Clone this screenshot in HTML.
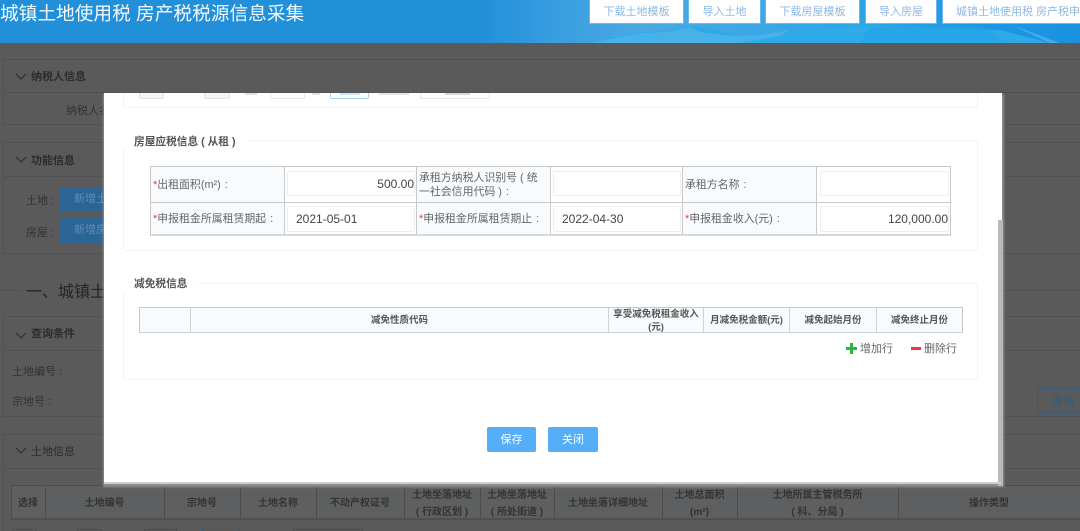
<!DOCTYPE html>
<html lang="zh-CN">
<head>
<meta charset="utf-8">
<style>
html,body{margin:0;padding:0;width:1080px;height:531px;overflow:hidden;background:#5a5a5a}
body{font-family:"Liberation Sans","Noto Sans CJK SC",sans-serif;position:relative}
#root{position:absolute;left:0;top:0;width:1080px;height:531px;overflow:hidden;filter:blur(.3px)}
.a{position:absolute;box-sizing:border-box;white-space:nowrap}
.line{position:absolute;background:#515151;height:1px}
.vl{position:absolute;background:#4c4c4c;width:1px}
.bgt{position:absolute;color:#2c2c2c;font-size:11px;white-space:nowrap;line-height:14px}
.bgb{font-weight:bold}
.th{position:absolute;color:#333;font-size:10px;font-weight:bold;text-align:center;line-height:17px;top:486px;height:35px;display:flex;align-items:center;justify-content:center;white-space:nowrap}
.hb{position:absolute;top:-1px;height:25px;background:#fff;border:1px solid #6fb8ea;color:#8db8e6;font-size:11px;line-height:25px;text-align:center;white-space:nowrap;overflow:hidden;box-sizing:border-box}
.panel{position:absolute;border:1px solid #f3f3f3;border-radius:3px;box-sizing:border-box}
.legend{position:absolute;background:#fff;padding:0 11px;font-size:10.7px;font-weight:bold;color:#555;line-height:14px;white-space:nowrap}
.c{position:absolute;background:#f7fbfd;border-right:1px solid #c9c9c9;box-sizing:border-box;font-size:10.9px;color:#666;line-height:14px;display:flex;align-items:center;padding-left:2px;white-space:nowrap}
.c i{color:#f33;font-style:normal}
.c b{font-weight:normal;margin-left:4px}
.in{position:absolute;background:#fff;border:1px solid #eee;border-radius:2px;box-sizing:border-box;font-size:12px;color:#444;line-height:24px;white-space:nowrap}
.t2{position:absolute;background:#f7fbfd;border-right:1px solid #cfd2d4;box-sizing:border-box;font-size:9.5px;font-weight:bold;color:#555;text-align:center;line-height:13px;display:flex;align-items:center;justify-content:center;top:308px;height:24px;padding-top:1px}
.btn{position:absolute;top:427px;height:25px;background:#55aef8;border-radius:2px;color:#fff;font-size:11px;line-height:26px;text-align:center}
</style>
</head>
<body>
<div id="root">

<!-- header -->
<div class="a" style="left:0;top:0;width:1080px;height:43px;background:linear-gradient(90deg,#2190d9 0,#2190d9 480px,#3a9fe0 560px,#4aa8e3 640px,#3ba7e6 760px,#2aa4e6 880px,#1c97e2 980px,#1a92e0 1080px)"></div>
<svg class="a" style="left:0;top:0" width="1080" height="43" viewBox="0 0 1080 43">
  <path d="M585 43 L640 32 L665 31 L690 26 L715 30 L745 35 L790 33 L810 28 L860 25 L1000 30 L1050 43Z" fill="#2eaae9"/>
  <path d="M590 43 L640 33 L668 32 L690 27 L700 32 L730 36 L760 35 L790 30 L780 36 L740 43Z" fill="#58b6ea" opacity=".6"/>
  <path d="M1012 25 L1028 31 L1060 43 L1050 43 L1022 30Z" fill="#7cc6ee" opacity=".45"/>
  <path d="M870 27 L980 26 L1010 43 L860 43Z" fill="#22a3e6" opacity=".6"/>
</svg>
<div class="a" style="left:0;top:0;height:28px;line-height:27px;font-size:18.7px;color:#f4f9fd">城镇土地使用税 房产税税源信息采集</div>
<div class="hb" style="left:589px;width:95px">下载土地模板</div>
<div class="hb" style="left:688px;width:73px">导入土地</div>
<div class="hb" style="left:765px;width:95px">下载房屋模板</div>
<div class="hb" style="left:865px;width:72px">导入房屋</div>
<div class="hb" style="left:942px;width:140px;text-align:left;padding-left:13px">城镇土地使用税 房产税申报</div>

<!-- background page -->
<div class="a" style="left:3px;top:59px;width:1090px;height:66px;border:1px solid #515151"></div>
<div class="line" style="left:3px;top:92px;width:1077px"></div>
<svg class="a" style="left:15px;top:73px" width="12" height="8"><path d="M1 1 L6 6 L11 1" fill="none" stroke="#2c2c2c"/></svg>
<div class="bgt bgb" style="left:31px;top:70px">纳税人信息</div>
<div class="bgt" style="left:66px;top:104px;color:#333">纳税人名称</div>

<div class="a" style="left:3px;top:142px;width:1090px;height:112px;border:1px solid #515151"></div>
<div class="line" style="left:3px;top:176px;width:1077px"></div>
<svg class="a" style="left:15px;top:156px" width="12" height="8"><path d="M1 1 L6 6 L11 1" fill="none" stroke="#2c2c2c"/></svg>
<div class="bgt bgb" style="left:31px;top:154px">功能信息</div>
<div class="bgt" style="left:26px;top:194px;color:#333">土地 :</div>
<div class="bgt" style="left:26px;top:226px;color:#333">房屋 :</div>
<div class="a" style="left:60px;top:187px;width:60px;height:25px;background:#2b6596;color:#5f8db5;font-size:11px;line-height:25px;padding-left:14px">新增土地</div>
<div class="a" style="left:60px;top:218px;width:60px;height:25px;background:#2b6596;color:#5f8db5;font-size:11px;line-height:25px;padding-left:14px">新增房屋</div>

<div class="line" style="left:0;top:290px;width:20px"></div>
<div class="line" style="left:200px;top:290px;width:880px"></div>
<div class="bgt" style="left:26px;top:283px;font-size:16px;line-height:20px;color:#242424">一、城镇土地</div>

<div class="a" style="left:3px;top:316px;width:1090px;height:101px;border:1px solid #515151"></div>
<div class="line" style="left:3px;top:350px;width:1077px"></div>
<svg class="a" style="left:15px;top:332px" width="12" height="8"><path d="M1 1 L6 6 L11 1" fill="none" stroke="#2c2c2c"/></svg>
<div class="bgt bgb" style="left:31px;top:327px">查询条件</div>
<div class="bgt" style="left:12px;top:365px;color:#333">土地编号 :</div>
<div class="bgt" style="left:12px;top:395px;color:#333">宗地号 :</div>
<div class="a" style="left:1037px;top:388px;width:60px;height:25px;border:1px solid #2f5c82;border-radius:2px;color:#2f5c82;font-size:11px;line-height:24px;padding-left:14px">查询</div>

<div class="a" style="left:3px;top:434px;width:1090px;height:110px;border:1px solid #515151"></div>
<div class="line" style="left:3px;top:468px;width:1077px"></div>
<svg class="a" style="left:15px;top:447px" width="12" height="8"><path d="M1 1 L6 6 L11 1" fill="none" stroke="#2c2c2c"/></svg>
<div class="bgt" style="left:31px;top:445px">土地信息</div>

<div class="a" style="left:11px;top:485px;width:1075px;height:35px;background:#5e5f60;border:1px solid #4c4c4c;border-bottom:2px solid #4f4f4f"></div>
<div class="vl" style="left:45px;top:485px;height:35px"></div>
<div class="vl" style="left:164px;top:485px;height:35px"></div>
<div class="vl" style="left:240px;top:485px;height:35px"></div>
<div class="vl" style="left:316px;top:485px;height:35px"></div>
<div class="vl" style="left:404px;top:485px;height:35px"></div>
<div class="vl" style="left:480px;top:485px;height:35px"></div>
<div class="vl" style="left:554px;top:485px;height:35px"></div>
<div class="vl" style="left:662px;top:485px;height:35px"></div>
<div class="vl" style="left:737px;top:485px;height:35px"></div>
<div class="vl" style="left:898px;top:485px;height:35px"></div>
<div class="th" style="left:11px;width:34px">选择</div>
<div class="th" style="left:45px;width:119px">土地编号</div>
<div class="th" style="left:164px;width:76px">宗地号</div>
<div class="th" style="left:240px;width:76px">土地名称</div>
<div class="th" style="left:316px;width:88px">不动产权证号</div>
<div class="th" style="left:404px;width:76px">土地坐落地址<br>( 行政区划 )</div>
<div class="th" style="left:480px;width:74px">土地坐落地址<br>( 所处街道 )</div>
<div class="th" style="left:554px;width:108px">土地坐落详细地址</div>
<div class="th" style="left:662px;width:75px">土地总面积<br>(m²)</div>
<div class="th" style="left:737px;width:161px">土地所属主管税务所<br>( 科、分局 )</div>
<div class="th" style="left:898px;width:182px">操作类型</div>
<div class="a" style="left:12px;top:529px;width:25px;height:6px;border:1px solid #4c4c4c;border-radius:2px"></div>
<div class="a" style="left:77px;top:529px;width:25px;height:6px;border:1px solid #4c4c4c;border-radius:2px"></div>
<div class="a" style="left:144px;top:529px;width:33px;height:6px;border:1px solid #4c4c4c;border-radius:2px"></div>
<div class="a" style="left:202px;top:529px;width:38px;height:6px;border:1px solid #2f5c82;border-radius:2px"></div>
<div class="a" style="left:293px;top:529px;width:70px;height:6px;border:1px solid #4c4c4c;border-radius:2px"></div>

<!-- modal shadow + modal -->
<div class="a" style="left:103px;top:94px;width:901px;height:393px;background:#8f8f8f;filter:blur(1px)"></div>
<div class="a" style="left:104px;top:93px;width:898px;height:389px;background:#fff;overflow:hidden"></div>
<div class="a" style="left:998px;top:220px;width:5px;height:266px;background:#b9b9b9"></div>
<div class="a" style="left:104px;top:482px;width:897px;height:2px;background:#cfcfcf"></div>

<!-- modal clipped top -->
<div class="a" style="left:123px;top:93px;width:855px;height:15px;border:1px solid #f3f3f3;border-top:0;border-radius:0 0 3px 3px"></div>
<div class="a" style="left:139px;top:93px;width:25px;height:6px;background:#f4f4f4;border:1px solid #e2e2e2;border-top:0;border-radius:0 0 2px 2px"></div>
<div class="a" style="left:204px;top:93px;width:26px;height:6px;background:#f4f4f4;border:1px solid #e2e2e2;border-top:0;border-radius:0 0 2px 2px"></div>
<div class="a" style="left:270px;top:93px;width:35px;height:6px;background:#fff;border:1px solid #e6e6e6;border-top:0;border-radius:0 0 2px 2px"></div>
<div class="a" style="left:330px;top:93px;width:39px;height:6px;background:#fff;border:1px solid #a9d3f7;border-top:0;border-radius:0 0 2px 2px"></div>
<div class="a" style="left:340px;top:93px;width:20px;height:2px;background:#cfe4f7"></div>
<div class="a" style="left:420px;top:93px;width:70px;height:6px;background:#fff;border:1px solid #e6e6e6;border-top:0;border-radius:0 0 2px 2px"></div>
<div class="a" style="left:245px;top:93px;width:12px;height:2px;background:#e0e0e0"></div>
<div class="a" style="left:312px;top:93px;width:8px;height:2px;background:#e0e0e0"></div>
<div class="a" style="left:379px;top:93px;width:30px;height:2px;background:#e4e4e4"></div>
<div class="a" style="left:445px;top:93px;width:25px;height:2px;background:#d8d8d8"></div>

<!-- panel 1 -->
<div class="panel" style="left:123px;top:140px;width:855px;height:111px"></div>
<div class="legend" style="left:123px;top:135px">房屋应税信息 ( 从租 )</div>

<div class="a" style="left:150px;top:166px;width:801px;height:70px;background:#fff;border:1px solid #c9c9c9;border-bottom:2px solid #d8d8d8"></div>
<div class="c" style="left:151px;top:167px;width:134px;height:35px"><span><i>*</i>出租面积(m²)<b>:</b></span></div>
<div class="c" style="left:285px;top:167px;width:132px;height:35px;background:#fff"></div>
<div class="c" style="left:417px;top:167px;width:134px;height:35px"><span>承租方纳税人识别号 ( 统<br>一社会信用代码 )<b>:</b></span></div>
<div class="c" style="left:551px;top:167px;width:132px;height:35px;background:#fff"></div>
<div class="c" style="left:683px;top:167px;width:134px;height:35px"><span>承租方名称<b>:</b></span></div>
<div class="a" style="left:151px;top:202px;width:799px;height:1px;background:#c9c9c9"></div>
<div class="c" style="left:151px;top:203px;width:134px;height:31px"><span><i>*</i>申报租金所属租赁期起<b>:</b></span></div>
<div class="c" style="left:285px;top:203px;width:132px;height:31px;background:#fff"></div>
<div class="c" style="left:417px;top:203px;width:134px;height:31px"><span><i>*</i>申报租金所属租赁期止<b>:</b></span></div>
<div class="c" style="left:551px;top:203px;width:132px;height:31px;background:#fff"></div>
<div class="c" style="left:683px;top:203px;width:134px;height:31px"><span><i>*</i>申报租金收入(元)<b>:</b></span></div>

<div class="in" style="left:287px;top:171px;width:128px;height:25px;text-align:right">500.00</div>
<div class="in" style="left:553px;top:171px;width:128px;height:25px"></div>
<div class="in" style="left:820px;top:171px;width:129px;height:25px"></div>
<div class="in" style="left:287px;top:206px;width:128px;height:26px;padding-left:8px">2021-05-01</div>
<div class="in" style="left:553px;top:206px;width:128px;height:26px;padding-left:8px">2022-04-30</div>
<div class="in" style="left:820px;top:206px;width:129px;height:26px;text-align:right">120,000.00</div>

<!-- panel 2 -->
<div class="panel" style="left:123px;top:283px;width:855px;height:97px"></div>
<div class="legend" style="left:123px;top:277px">减免税信息</div>

<div class="a" style="left:139px;top:307px;width:824px;height:26px;background:#f7fbfd;border:1px solid #c9c9c9;border-bottom:2px solid #d4d4d4"></div>
<div class="t2" style="left:140px;width:51px"></div>
<div class="t2" style="left:191px;width:418px">减免性质代码</div>
<div class="t2" style="left:609px;width:95px;font-size:9.5px">享受减免税租金收入<br>(元)</div>
<div class="t2" style="left:704px;width:86px">月减免税金额(元)</div>
<div class="t2" style="left:790px;width:87px">减免起始月份</div>
<div class="t2" style="left:877px;width:85px;border-right:0">减免终止月份</div>

<svg class="a" style="left:846px;top:343px" width="11" height="11"><path d="M4 0h3v4h4v3H7v4H4V7H0V4h4z" fill="#28b83f"/></svg>
<div class="a" style="left:860px;top:342px;font-size:11px;line-height:14px;color:#666">增加行</div>
<div class="a" style="left:911px;top:347px;width:10px;height:3px;background:#f0363f"></div>
<div class="a" style="left:924px;top:342px;font-size:11px;line-height:14px;color:#666">删除行</div>

<!-- buttons -->
<div class="btn" style="left:487px;width:49px">保存</div>
<div class="btn" style="left:548px;width:50px">关闭</div>

</div>
</body>
</html>
